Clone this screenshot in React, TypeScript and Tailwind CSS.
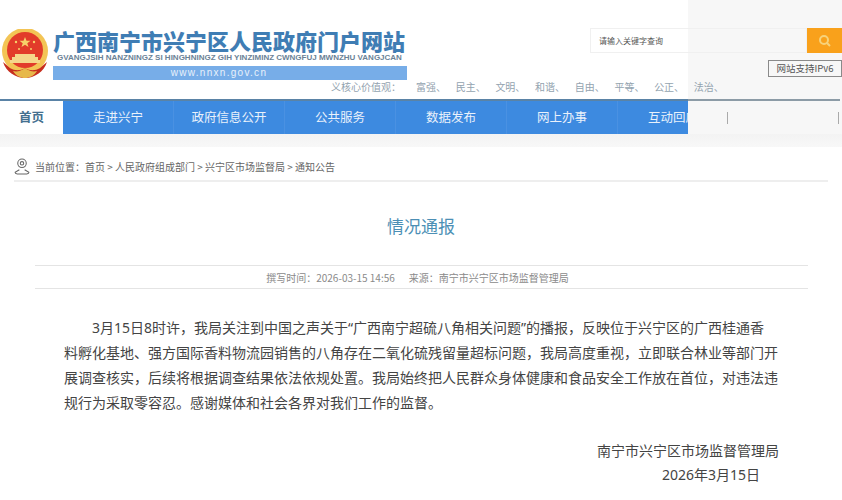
const cjk = "font-['Noto_Sans_CJK_SC','Noto_Sans',sans-serif]";
const body = "font-['Noto_Sans','Noto_Sans_CJK_SC',sans-serif]";

const navItems = ["走进兴宁", "政府信息公开", "公共服务", "数据发布", "网上办事", "互动回应"];

const values = ["富强、", "民主、", "文明、", "和谐、", "自由、", "平等、", "公正、", "法治、"];

function Emblem() {
  return (
    <svg width="50" height="52" viewBox="0 0 50 52" className="shrink-0">
      <circle cx="25" cy="22" r="23" fill="#f3c455" />
      <circle cx="25" cy="21" r="18" fill="#e23b2a" />
      <path d="M25 8l1.500 3.800h4l-3.200 2.400 1.200 3.900-3.500-2.300-3.500 2.300 1.200-3.900-3.200-2.400h4z" fill="#f6d26a" />
      <circle cx="16" cy="13" r="1.200" fill="#f6d26a" />
      <circle cx="34" cy="13" r="1.200" fill="#f6d26a" />
      <circle cx="19" cy="20" r="1" fill="#f6d26a" />
      <circle cx="31" cy="20" r="1" fill="#f6d26a" />
      <path d="M12 28h26v3H12zM15 25h20v3H15zM10 31h30v3H10z" fill="#f5d68a" />
      <path d="M3 33c3 10 13 16 22 16s19-6 22-16l-7 6c-5 3-10 3-15 0-5 3-10 3-15 0z" fill="#c72e1e" />
      <path d="M13 42c4 1 8 0 12-3 4 3 8 4 12 3-3 5-8 7-12 7s-9-2-12-7z" fill="#e7b84a" />
    </svg>
  );
}

function Header() {
  return (
    <div className="relative z-20 flex h-[99px] items-start">
      <div className="mt-[29px]">
        <Emblem />
      </div>
      <div className="ml-[3px] mt-[27px] w-[354px]">
        <div className={`${cjk} whitespace-nowrap text-[22px] leading-[26px] font-black text-[#3f7db4]`}>
          广西南宁市兴宁区人民政府门户网站
        </div>
        <div className="ml-[4px] whitespace-nowrap font-['Liberation_Sans',sans-serif] text-[8px] leading-[9px] font-bold text-[#6b8296]">
          GVANGJSIH NANZNINGZ SI HINGHNINGZ GIH YINZIMINZ CWNGFUJ MWNZHU VANGJCAN
        </div>
        <div className="mt-[4px] h-[14px] bg-[#77ade8] pr-[22px] text-center font-['Liberation_Sans',sans-serif] text-[10px] leading-[14px] tracking-[1.3px] text-[#e8f1fb]">
          www.nnxn.gov.cn
        </div>
      </div>
      <div className="ml-auto flex w-[252px] flex-col items-end pt-[28px]">
        <div className="flex h-[25px] w-[252px]">
          <div className={`${cjk} flex flex-1 items-center border border-[#f0f0f0] pl-[8px] text-[8px] text-[#555]`}>
            请输入关键字查询
          </div>
          <div className="flex w-[35px] items-center justify-center bg-[#f9a11b]">
            <svg width="13" height="13" viewBox="0 0 13 13" fill="none" stroke="#f7d27a" strokeWidth="2">
              <circle cx="6" cy="6" r="4" />
              <path d="M9 9l3 3" />
            </svg>
          </div>
        </div>
        <div className={`${cjk} mt-[7px] h-[17px] w-[74px] border border-[#8a8a8a] bg-[#f7f7f7] text-center text-[9.5px] leading-[15px] text-[#555]`}>
          网站支持IPv6
        </div>
      </div>
    </div>
  );
}

function Nav() {
  return (
    <div className="flex h-[35px] border-t-2 border-[#5a83a6]">
      <div className={`${cjk} flex w-[63px] items-center justify-center text-[12.5px] font-bold text-[#44708f]`}>
        首页
      </div>
      <div className="flex flex-1 overflow-hidden bg-[#3d8ae0]">
        {navItems.map((item) => (
          <div
            key={item}
            className={`${cjk} flex w-[111px] shrink-0 items-center justify-center border-r border-[#4a91e2] text-[12.5px] text-[#e9f1fb]`}
          >
            {item}
          </div>
        ))}
      </div>
    </div>
  );
}

export default function App() {
  return (
    <div className="relative h-[500px] w-[842px] overflow-hidden bg-white">
      <Header />
      <div className={`${cjk} absolute left-[331px] top-[79px] z-20 flex text-[10px] leading-[15px] text-[#93a3af]`}>
        <span className="w-[85px]">义核心价值观：</span>
        {values.map((v) => (
          <span key={v} className="w-[39.700px] whitespace-nowrap">
            {v}
          </span>
        ))}
      </div>
      <Nav />
      {/* washed out strip on the right of the screenshot */}
      <div className="absolute right-0 top-0 z-10 h-[134px] w-[154px] bg-[#f7f7f7]">
        <div className="absolute left-0 right-[2px] top-[99px] h-[2px] bg-[#8c9ba6]" />
        <div className="absolute left-[39px] top-[112px] h-[12px] w-px bg-[#aaaaaa]" />
        <div className="absolute left-[150px] top-[112px] h-[12px] w-px bg-[#aaaaaa]" />
      </div>
      <div className="h-[13px] bg-gradient-to-b from-[#f3f3f3] to-[#f8f8f8]" />

      <div className="mx-[14px] mt-[11px] flex h-[24px] items-start border-b-2 border-[#eeeeee]">
        <svg width="16" height="17" viewBox="0 0 15 16" fill="none" stroke="#666" strokeWidth="1" className="shrink-0">
          <circle cx="7.500" cy="5" r="4" />
          <circle cx="7.500" cy="5" r="1.600" />
          <path d="M5 11l-4 2.500c0 1 1 1.500 2 1.500h9c1 0 2-.5 2-1.500L10 11" />
        </svg>
        <div className={`${cjk} ml-[5px] whitespace-nowrap text-[10px] leading-[18px] text-[#666]`}>
          当前位置：首页 &gt; 人民政府组成部门 &gt; 兴宁区市场监督局 &gt; 通知公告
        </div>
      </div>

      <h1 className={`${cjk} mt-[31px] text-center text-[17px] leading-[26px] text-[#4c8fb5]`}>情况通报</h1>

      <div className={`${cjk} ml-[35px] mr-[34px] mt-[26px] flex h-[24px] items-center justify-center gap-[14px] border-y border-[#e4e4e4] pr-[8px] text-[10px] text-[#8a8a8a]`}>
        <span>撰写时间：2026-03-15 14:56</span>
        <span>来源：南宁市兴宁区市场监督管理局</span>
      </div>

      <p className={`${body} ml-[64px] mt-[26px] w-[714px] indent-[28px] text-[14px] leading-[25px] text-[#444]`}>
        3月15日8时许，我局关注到中国之声关于“广西南宁超硫八角相关问题”的播报，反映位于兴宁区的广西桂通香料孵化基地、强方国际香料物流园销售的八角存在二氧化硫残留量超标问题，我局高度重视，立即联合林业等部门开展调查核实，后续将根据调查结果依法依规处置。我局始终把人民群众身体健康和食品安全工作放在首位，对违法违规行为采取零容忍。感谢媒体和社会各界对我们工作的监督。
      </p>

      <div className={`${body} mt-[24px] pr-[63px] text-right text-[14px] leading-[24px] text-[#444]`}>
        <div>南宁市兴宁区市场监督管理局</div>
        <div className="pr-[19px]">2026年3月15日</div>
      </div>
    </div>
  );
}
